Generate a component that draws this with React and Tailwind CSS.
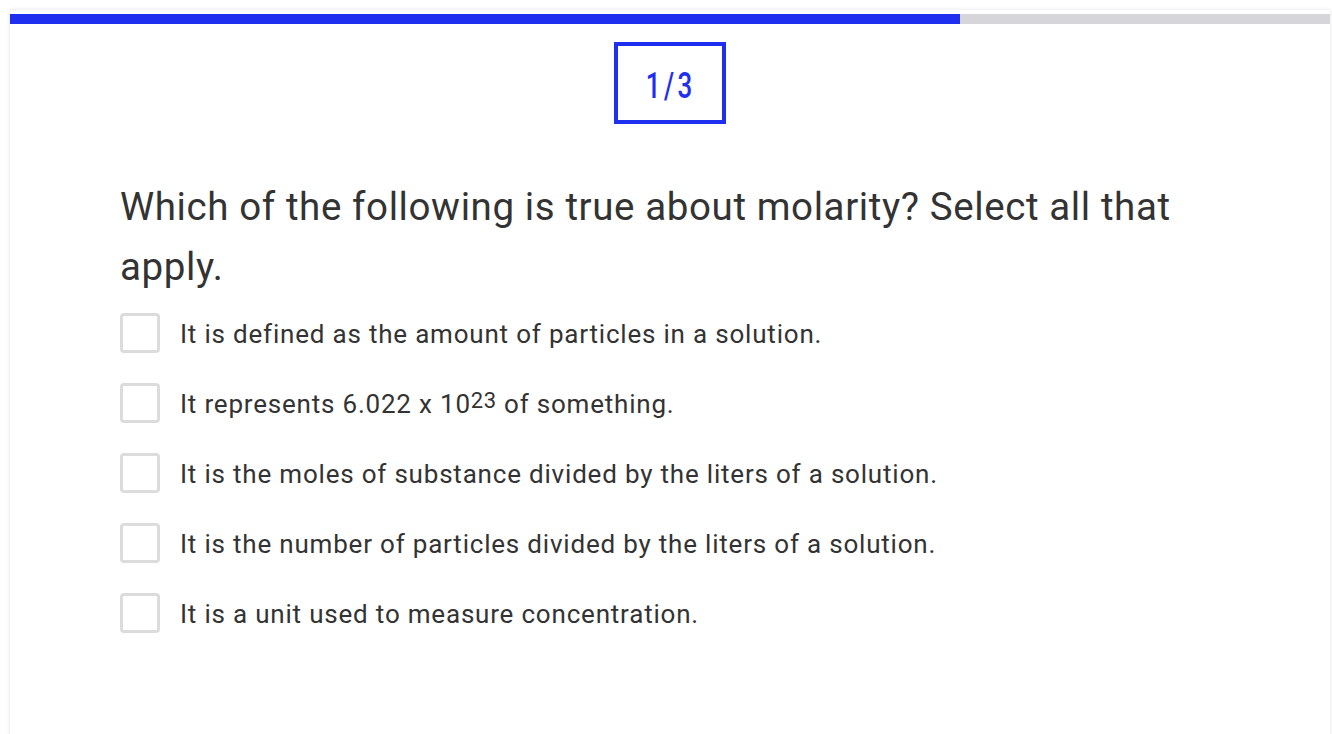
import React from "react";

const options = [
  <>It is defined as the amount of particles in a solution.</>,
  <>It represents 6.022 x 10<sup className="text-[22px] relative top-[-5px] tracking-[0.6px]">23</sup> of something.</>,
  <>It is the moles of substance divided by the liters of a solution.</>,
  <>It is the number of particles divided by the liters of a solution.</>,
  <>It is a unit used to measure concentration.</>,
];

export default function App() {
  return (
    <div className="w-[1332px] h-[734px] bg-white overflow-hidden" style={{ fontFamily: "Roboto, 'Noto Sans', sans-serif" }}>
      <div className="ml-[10px] mr-[2px] mt-[10px] h-[740px] bg-white shadow-[0_0_4px_rgba(0,0,0,0.12)] pt-[4px]">
        <div className="h-[10px] w-full bg-[#d6d6da]">
          <div className="h-full w-[950px] bg-[#1f2ff0]"></div>
        </div>
        <div className="flex justify-center mt-[18px]">
          <div className="w-[112px] h-[82px] border-[4px] border-[#1f2ff0] flex items-center justify-center pt-[4px] pl-[2px]">
            <span className="text-[#1f2ff0] text-[37px] font-medium leading-none inline-block scale-x-[0.7] tracking-[5px]">1/3</span>
          </div>
        </div>
        <div className="pl-[110px] pr-[100px] mt-[53px]">
          <h1 className="text-[38.5px] leading-[60px] text-[#333333] font-normal tracking-[0.6px]">
            Which of the following is true about molarity? Select all that apply.
          </h1>
          <div className="mt-[16px] flex flex-col gap-[30px]">
            {options.map((o, i) => (
              <label key={i} className="flex items-center gap-[20px] h-[40px]">
                <span className="w-[40px] h-[40px] rounded-[4px] border-[3px] border-[#dcdcdc] bg-white shrink-0"></span>
                <span className="text-[26px] text-[#333333] leading-[40px] tracking-[0.8px] pt-[2px]">{o}</span>
              </label>
            ))}
          </div>
        </div>
      </div>
    </div>
  );
}
